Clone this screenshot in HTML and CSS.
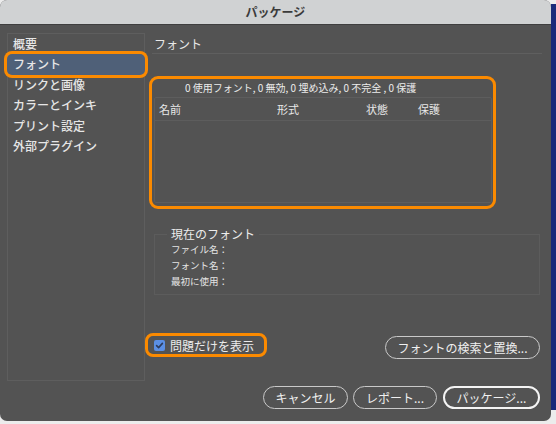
FILE: index.html
```html
<!DOCTYPE html>
<html lang="ja">
<head>
<meta charset="utf-8">
<link rel="stylesheet" href="styles.css">
</head>
<body>
<div class="window">
  <div class="titlebar">パッケージ</div>
  <div class="content">
    <div class="main">
      <ul class="sidebar">
        <li>概要</li>
        <li class="selected">フォント</li>
        <li>リンクと画像</li>
        <li>カラーとインキ</li>
        <li>プリント設定</li>
        <li>外部プラグイン</li>
      </ul>
      <div class="panel">
        <div class="heading">フォント</div>
        <div class="fontbox">
          <div class="summary">0 使用フォント, 0 無効, 0 埋め込み, 0 不完全 , 0 保護</div>
          <div class="table">
            <div class="thead">
              <span>名前</span><span>形式</span><span>状態</span><span>保護</span>
            </div>
          </div>
        </div>
        <fieldset class="group">
          <legend>現在のフォント</legend>
          <div class="info">ファイル名：</div>
          <div class="info">フォント名：</div>
          <div class="info">最初に使用：</div>
        </fieldset>
        <div class="optrow">
          <label class="check"><span class="box"><svg viewBox="0 0 11 11" width="11" height="11"><path d="M2.6 5.6 L4.6 7.6 L8.4 3.4" fill="none" stroke="#2c3c5c" stroke-width="1.6" stroke-linecap="round" stroke-linejoin="round"/></svg></span>問題だけを表示</label>
          <button class="btn find">フォントの検索と置換...</button>
        </div>
      </div>
    </div>
    <div class="footer">
      <button class="btn cancel">キャンセル</button>
      <button class="btn report">レポート...</button>
      <button class="btn default">パッケージ...</button>
    </div>
  </div>
</div>
<div class="strip"></div>
</body>
</html>
```
FILE: styles.css
```css
html, body {
  margin: 0;
  padding: 0;
}
body {
  width: 556px;
  height: 424px;
  background: #ececec;
  display: flex;
  align-items: flex-start;
  font-family: "Noto Sans CJK JP", "Noto Sans", sans-serif;
  overflow: hidden;
}
.window {
  width: 551px;
  height: 421px;
  background: #535353;
  border-radius: 7px;
  display: flex;
  flex-direction: column;
  overflow: hidden;
}
.strip {
  width: 5px;
  height: 406px;
  margin-top: 4px;
  background: #1b2a7a;
}
.titlebar {
  height: 24px;
  line-height: 24px;
  background: #d0d2d3;
  border-bottom: 1px solid #3f3f3f;
  text-align: center;
  font-size: 12px;
  font-weight: 700;
  color: #3b3b3b;
  flex: none;
}
.content {
  flex: 1;
  padding: 8px 9px 0 7px;
  display: flex;
  flex-direction: column;
}
.main {
  display: flex;
  height: 348px;
  gap: 1px;
}
.sidebar {
  list-style: none;
  margin: 0;
  padding: 0;
  width: 136px;
  border: 1px solid #5e5e5e;
  flex: none;
}
.sidebar li {
  line-height: 20.4px;
  padding-left: 5px;
  font-size: 12px;
  font-weight: 500;
  color: #e6e6e6;
}
.sidebar li.selected {
  background: #4f6078;
  margin: 0 -1px;
  padding-left: 6px;
  border-radius: 5px;
  box-shadow: 0 0 0 3px #fb8a00;
}
.panel {
  flex: 1;
  display: flex;
  flex-direction: column;
}
.heading {
  margin-left: 6px;
  padding-left: 2px;
  padding-top: 2px;
  line-height: 18px;
  font-size: 12px;
  color: #e8e8e8;
  border-bottom: 1px solid #5f5f5f;
}
.fontbox {
  margin-top: 22px;
  margin-left: 3px;
  width: 338px;
  height: 124px;
  border: 3px solid #fb8a00;
  border-radius: 9px;
  padding: 0 1px 3px 2px;
  display: flex;
  flex-direction: column;
}
.summary {
  height: 18px;
  line-height: 17px;
  padding-left: 31px;
  font-size: 10px;
  color: #ececec;
}
.table {
  flex: 1;
  border: 1px solid #5d5d5d;
  border-radius: 2px;
}
.thead {
  height: 22px;
  border-bottom: 1px solid #5d5d5d;
  display: grid;
  grid-template-columns: 118px 89px 52px 1fr;
  padding-left: 4px;
  align-items: center;
  font-size: 11px;
  color: #e8e8e8;
}
.group {
  margin: 18px 0 0 8px;
  width: 386px;
  padding: 0 0 5px 12px;
  border: 1px solid #5c5c5c;
  box-sizing: border-box;
  min-width: 0;
}
.group legend {
  padding: 0 4px;
  font-size: 12px;
  line-height: 14px;
  color: #ececec;
}
.info {
  padding-left: 4px;
  line-height: 16px;
  font-size: 9.5px;
  color: #e4e4e4;
}
.optrow {
  margin-top: 38px;
  display: flex;
  align-items: flex-start;
  justify-content: space-between;
}
.check {
  height: 18px;
  border: 3px solid #fb8a00;
  border-radius: 8px;
  padding: 0 10px 0 6px;
  margin-left: -1px;
  display: flex;
  align-items: center;
  gap: 5px;
  font-size: 12px;
  color: #ececec;
}
.box {
  width: 11px;
  height: 11px;
  background: #5b8fe3;
  border-radius: 2px;
  display: flex;
}
.btn {
  height: 23px;
  box-sizing: border-box;
  border: 1.5px solid #c9c9c9;
  border-radius: 12px;
  background: transparent;
  color: #f0f0f0;
  font-family: "Noto Sans CJK JP", "Noto Sans", sans-serif;
  font-size: 12px;
  padding: 0;
  line-height: 20px;
}
.find {
  width: 155px;
  margin-top: 3px;
  margin-right: 2px;
}
.footer {
  margin-top: 5px;
  display: flex;
  justify-content: flex-end;
  gap: 5px;
  padding-right: 2px;
}
.cancel { width: 85px; }
.report { width: 84px; }
.default {
  width: 97px;
  margin-left: 1px;
  border: 2px solid #f4f4f4;
}
```
